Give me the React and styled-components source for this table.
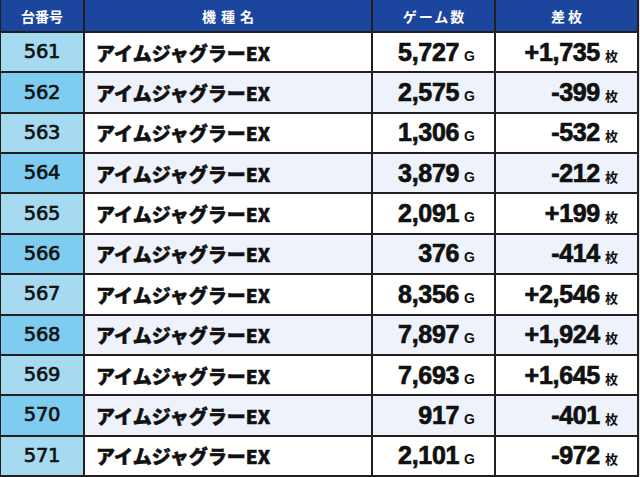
import React from "react";
import styled, { createGlobalStyle } from "styled-components";

const Global = createGlobalStyle`
  html, body { margin: 0; padding: 0; background: #e4e4e4; }
  #root { width: 640px; height: 477px; }
`;

const Table = styled.div`
  width: 639px;
  height: 477px;
  box-sizing: border-box;
  display: grid;
  grid-template-columns: 82px 286px 121px 141px;
  grid-template-rows: 31px repeat(11, 1fr);
  column-gap: 2px;
  row-gap: 2px;
  padding: 0 2px 2px 1px;
  background: #231f20;
`;

const Row = styled.div`
  display: contents;
`;

const HeadCell = styled.div`
  background: #1c459d;
  color: #fff;
  font-family: "Noto Sans CJK JP", "Noto Sans", sans-serif;
  font-weight: 700;
  font-size: 14px;
  letter-spacing: ${(p) => p.$ls || 0}px;
  text-indent: ${(p) => p.$ls || 0}px;
  display: flex;
  align-items: center;
  justify-content: center;
`;

const NoCell = styled.div`
  background: ${(p) => (p.$even ? "#7ecdf0" : "#a6daf0")};
  color: #111;
  font-family: "DejaVu Sans", "Liberation Sans", sans-serif;
  font-weight: 400;
  font-size: 19.5px;
  -webkit-text-stroke: 0.7px #111;
  letter-spacing: -0.3px;
  display: flex;
  align-items: center;
  justify-content: center;
  padding-bottom: 1px;
`;

const NameCell = styled.div`
  background: ${(p) => (p.$even ? "#eef2fa" : "#ffffff")};
  color: #111;
  font-family: "Noto Sans CJK JP", "Noto Sans", sans-serif;
  font-weight: 900;
  font-size: 19px;
  -webkit-text-stroke: 0.5px #111;
  display: flex;
  align-items: center;
  padding-left: 11px;
`;

const ValCell = styled.div`
  background: ${(p) => (p.$even ? "#eef2fa" : "#ffffff")};
  color: #111;
  display: flex;
  align-items: baseline;
  justify-content: flex-end;
  padding-right: 19px;
  box-sizing: border-box;
  align-content: center;
  flex-wrap: wrap;
`;

const Big = styled.span`
  font-family: "Liberation Sans", Arial, sans-serif;
  font-weight: 700;
  font-size: 25px;
  letter-spacing: -0.3px;
  -webkit-text-stroke: 0.7px #111;
  line-height: 1;
`;

const Unit = styled.span`
  font-family: ${(p) =>
    p.$cjk
      ? '"Noto Sans CJK JP", "Noto Sans", sans-serif'
      : '"Liberation Sans", Arial, sans-serif'};
  font-weight: 700;
  font-size: ${(p) => (p.$cjk ? 13 : 14)}px;
  margin-left: 5px;
  line-height: 1;
`;

const rows = [
  ["561", "5,727", "+1,735"],
  ["562", "2,575", "-399"],
  ["563", "1,306", "-532"],
  ["564", "3,879", "-212"],
  ["565", "2,091", "+199"],
  ["566", "376", "-414"],
  ["567", "8,356", "+2,546"],
  ["568", "7,897", "+1,924"],
  ["569", "7,693", "+1,645"],
  ["570", "917", "-401"],
  ["571", "2,101", "-972"],
];

export default function App() {
  return (
    <>
      <Global />
      <Table>
        <Row>
          <HeadCell>台番号</HeadCell>
          <HeadCell $ls={5}>機種名</HeadCell>
          <HeadCell $ls={2}>ゲーム数</HeadCell>
          <HeadCell $ls={3}>差枚</HeadCell>
        </Row>
        {rows.map(([no, games, diff], i) => {
          const even = i % 2 === 1;
          return (
            <Row key={no}>
              <NoCell $even={even}>{no}</NoCell>
              <NameCell $even={even}>アイムジャグラーEX</NameCell>
              <ValCell $even={even}>
                <Big>{games}</Big>
                <Unit>G</Unit>
              </ValCell>
              <ValCell $even={even}>
                <Big>{diff}</Big>
                <Unit $cjk>枚</Unit>
              </ValCell>
            </Row>
          );
        })}
      </Table>
    </>
  );
}
